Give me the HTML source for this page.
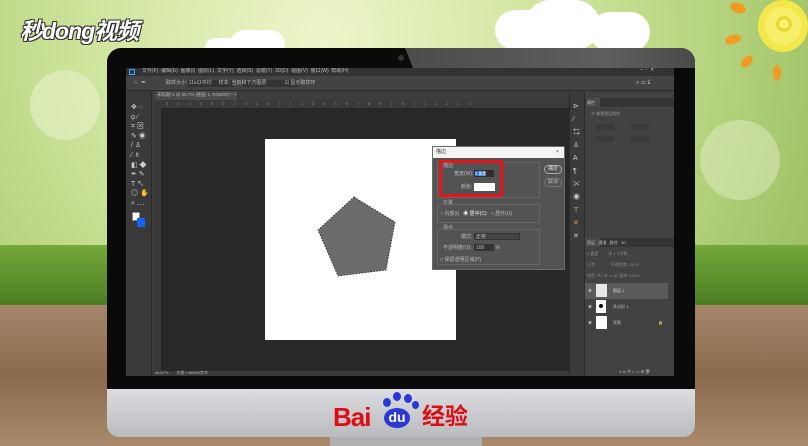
<!DOCTYPE html>
<html><head><meta charset="utf-8"><style>
*{margin:0;padding:0;box-sizing:border-box}
body{width:808px;height:446px;overflow:hidden;position:relative;font-family:"Liberation Sans","Noto Sans CJK SC",sans-serif;background:#9c7a5c;line-height:1}
.a{position:absolute}
.t{position:absolute;font-size:5px;color:#bbb;white-space:nowrap;line-height:1}
</style></head><body>
<!-- background -->
<div class="a" style="left:0;top:0;width:808px;height:260px;background:radial-gradient(circle at 40% 15%,#eef5cc 0,#d2e6a0 40%,#b4d27c 75%,#9cc062 100%)"></div>
<div class="a" style="left:30px;top:70px;width:70px;height:70px;border-radius:50%;background:#eef6d6;opacity:.5"></div>
<div class="a" style="left:700px;top:120px;width:80px;height:80px;border-radius:50%;background:#eef6d6;opacity:.4"></div>
<div class="a" style="left:0;top:245px;width:808px;height:65px;background:linear-gradient(#74a83a,#4a7a22)"></div>
<div class="a" style="left:0;top:305px;width:808px;height:141px;background:linear-gradient(#a5866a,#8c6a4e 50%,#a98a6c)"></div>
<!-- clouds -->
<div class="a" style="left:495px;top:10px;width:60px;height:40px;border-radius:30px;background:#fff"></div>
<div class="a" style="left:525px;top:0;width:75px;height:50px;border-radius:38px;background:#fff"></div>
<div class="a" style="left:590px;top:12px;width:60px;height:40px;border-radius:30px;background:#fff"></div>
<div class="a" style="left:205px;top:38px;width:40px;height:20px;border-radius:20px;background:#fff"></div>
<div class="a" style="left:230px;top:30px;width:55px;height:30px;border-radius:28px;background:#fff"></div>
<!-- sun -->
<div class="a" style="left:758px;top:0;width:50px;height:52px;border-radius:50%;border:7px solid #f3e84a;background:#f7ef6a"></div>
<div class="a" style="left:776px;top:16px;width:16px;height:16px;border-radius:50%;border:3px solid #e6d730"></div>
<div class="a" style="left:730px;top:3px;width:16px;height:10px;border-radius:50%;background:#f39a22;transform:rotate(20deg)"></div>
<div class="a" style="left:725px;top:35px;width:16px;height:9px;border-radius:50%;background:#f39a22;transform:rotate(-15deg)"></div>
<div class="a" style="left:740px;top:57px;width:14px;height:9px;border-radius:50%;background:#f39a22;transform:rotate(-45deg)"></div>
<div class="a" style="left:773px;top:65px;width:8px;height:16px;border-radius:50%;background:#f39a22"></div>
<!-- logo -->
<div class="a" style="left:20px;top:20px;font-size:23px;font-weight:bold;font-style:italic;color:#fff;text-shadow:1px 1px 0 #333,-1px -1px 0 #333,1px -1px 0 #333,-1px 1px 0 #333;letter-spacing:-1px">秒dong视频</div>
<!-- stand -->
<div class="a" style="left:330px;top:436px;width:152px;height:10px;background:#b0b0b0"></div>
<!-- monitor -->
<div class="a" style="left:107px;top:48px;width:588px;height:342px;background:#0a0a0a;border-radius:14px 14px 0 0;overflow:hidden">
 <div class="a" style="left:298px;top:0;width:290px;height:20px;background:linear-gradient(90deg,#4c4c4c,#5e5e5e 70%,#4a4a4a);clip-path:polygon(0 0,100% 0,100% 100%,8px 100%)"></div>
 <div class="a" style="left:291px;top:7px;width:6px;height:6px;border-radius:50%;background:#333"></div>
</div>
<div class="a" style="left:107px;top:389px;width:588px;height:48px;background:linear-gradient(#dcdde0,#b9bbbe);border-radius:0 0 12px 12px"></div>
<div class="a" style="left:333px;top:404px;font-size:26px;font-weight:bold;color:#e00c14;letter-spacing:-1px">Bai</div>
<div class="a" style="left:384px;top:408px;width:26px;height:20px;border-radius:50%;background:#2a38d8;color:#fff;font-size:14px;font-weight:bold;text-align:center;line-height:18px">du</div>
<div class="a" style="left:383px;top:398px;width:8px;height:9px;border-radius:50%;background:#2a38d8"></div>
<div class="a" style="left:393px;top:392px;width:8px;height:9px;border-radius:50%;background:#2a38d8"></div>
<div class="a" style="left:404px;top:394px;width:8px;height:9px;border-radius:50%;background:#2a38d8"></div>
<div class="a" style="left:412px;top:401px;width:7px;height:8px;border-radius:50%;background:#2a38d8"></div>
<div class="a" style="left:422px;top:405px;font-size:23px;font-weight:bold;color:#e00c14">经验</div>
<!-- screen -->
<div class="a" style="left:126px;top:68px;width:548px;height:308px;background:#3c3c3c;overflow:hidden">
 <div class="a" style="left:0;top:0;width:548px;height:8px;background:#323232"></div>
 <div class="a" style="left:3px;top:1px;width:6px;height:6px;background:#1d3a6a;border:1px solid #31a8ff"></div>
 <div class="t" style="left:16px;top:1px">文件(F)&nbsp;&nbsp;编辑(E)&nbsp;&nbsp;图像(I)&nbsp;&nbsp;图层(L)&nbsp;&nbsp;文字(Y)&nbsp;&nbsp;选择(S)&nbsp;&nbsp;滤镜(T)&nbsp;&nbsp;3D(D)&nbsp;&nbsp;视图(V)&nbsp;&nbsp;窗口(W)&nbsp;&nbsp;帮助(H)</div>
 <div class="t" style="left:514px;top:0">–&nbsp;&nbsp;▫&nbsp;&nbsp;✕</div>
 <div class="a" style="left:0;top:8px;width:548px;height:15px;background:#434343;border-bottom:1px solid #2a2a2a"></div>
 <div class="t" style="left:8px;top:12px;font-size:6px">⌂&nbsp;&nbsp;✒</div>
 <div class="a" style="left:62px;top:12px;width:45px;height:7px;background:#333"></div>
 <div class="a" style="left:117px;top:12px;width:55px;height:7px;background:#333"></div>
 <div class="t" style="left:40px;top:13px">取样大小: 11x11平均&nbsp;&nbsp;&nbsp;&nbsp;&nbsp;样本: 当前和下方图层&nbsp;&nbsp;&nbsp;&nbsp;&nbsp;&nbsp;&nbsp;&nbsp;&nbsp;&nbsp;&nbsp;&nbsp;&nbsp;☑ 显示取样环</div>
 <div class="t" style="left:510px;top:12px;font-size:6px">⌕ ▭ ⇪</div>
 <!-- left toolbar -->
 <div class="a" style="left:0;top:24px;width:26px;height:284px;background:#3a3a3a;border-right:1px solid #2a2a2a"></div>
 <div class="t" style="left:5px;top:35px;font-size:7px;line-height:9.6px;color:#ccc">✥ ◌<br>ϙ ⁄<br>⌗ ⊠<br>✎ ◉<br>/ ♙<br>⁄ ♗<br>◧ ◆<br>✒ ✎<br>T ↖<br>◎ ✋<br>⌕ ⋯</div>
 <div class="a" style="left:6px;top:144px;width:8px;height:9px;background:#fff;border:1px solid #888"></div>
 <div class="a" style="left:11px;top:150px;width:8px;height:9px;background:#1560f5"></div>
 <!-- doc tab & rulers -->
 <div class="a" style="left:27px;top:23px;width:523px;height:9px;background:#3c3c3c"></div>
 <div class="a" style="left:29px;top:23px;width:82px;height:9px;background:#4a4a4a"></div>
 <div class="t" style="left:31px;top:25px;font-size:4.5px">未标题-1 @ 66.7% (图层 1, RGB/8#) * ×</div>
 <div class="a" style="left:27px;top:32px;width:416px;height:8px;background:#3a3a3a"></div>
 <div class="t" style="left:40px;top:34px;font-size:4px;color:#888;letter-spacing:9px">5040302010012345678910111213</div>
 <div class="a" style="left:27px;top:32px;width:8px;height:276px;background:#3a3a3a"></div>
 <div class="a" style="left:35px;top:40px;width:408px;height:263px;background:#282828"></div>
 <div class="a" style="left:27px;top:303px;width:416px;height:5px;background:#3a3a3a"></div>
 <div class="t" style="left:29px;top:303px;font-size:4px">66.67%&nbsp;&nbsp;&nbsp;&nbsp;&nbsp;&nbsp;&nbsp;文档:2.86M/0字节</div>
 <!-- document -->
 <div class="a" style="left:139px;top:71px;width:191px;height:201px;background:#fff"></div>
 <svg class="a" style="left:0;top:0" width="548" height="308"><polygon points="228,129 269,154 260,202 212,208 192,162" fill="#6b6b6b" stroke="#222" stroke-width="0.8" stroke-dasharray="1.5,1.5"/></svg>
 <!-- dialog -->
 <div class="a" style="left:306px;top:78px;width:133px;height:124px;background:#535353;border:1px solid #6a6a6a">
  <div class="a" style="left:0;top:0;width:131px;height:11px;background:#f4f4f4"></div>
  <div class="t" style="left:3px;top:3px;color:#333">描边</div>
  <div class="t" style="left:123px;top:3px;color:#333">×</div>
  <div class="a" style="left:4px;top:15px;width:103px;height:36px;border:1px solid #666"></div>
  <div class="a" style="left:6px;top:13px;width:64px;height:37px;border:3px solid #e8141c"></div>
  <div class="t" style="left:10px;top:17px">描边</div>
  <div class="t" style="left:21px;top:25px">宽度(W):</div>
  <div class="a" style="left:41px;top:23px;width:20px;height:7px;background:#2d2d2d"></div>
  <div class="a" style="left:42px;top:24px;width:10px;height:5px;background:#2a7ad8"></div>
  <div class="t" style="left:42px;top:25px;font-size:4px;color:#fff">5 像素</div>
  <div class="t" style="left:28px;top:38px">颜色:</div>
  <div class="a" style="left:41px;top:36px;width:21px;height:8px;background:#fff"></div>
  <div class="a" style="left:111px;top:18px;width:18px;height:9px;border:1px solid #aaa;border-radius:5px"></div>
  <div class="t" style="left:115px;top:20px;color:#ddd">确定</div>
  <div class="a" style="left:111px;top:31px;width:18px;height:9px;border:1px solid #777;border-radius:5px"></div>
  <div class="t" style="left:115px;top:33px">取消</div>
  <div class="t" style="left:10px;top:54px">位置</div>
  <div class="a" style="left:4px;top:57px;width:103px;height:19px;border:1px solid #666"></div>
  <div class="t" style="left:7px;top:65px">○ 内部(I)&nbsp;&nbsp;&nbsp;<span style="color:#eee">◉ 居中(C)</span>&nbsp;&nbsp;&nbsp;○ 居外(U)</div>
  <div class="t" style="left:10px;top:79px">混合</div>
  <div class="a" style="left:4px;top:82px;width:103px;height:36px;border:1px solid #666"></div>
  <div class="t" style="left:28px;top:88px">模式:</div>
  <div class="a" style="left:41px;top:86px;width:46px;height:7px;background:#444;border:1px solid #333"></div>
  <div class="t" style="left:43px;top:88px">正常</div>
  <div class="t" style="left:10px;top:99px">不透明度(O):</div>
  <div class="a" style="left:41px;top:97px;width:20px;height:7px;background:#333"></div>
  <div class="t" style="left:43px;top:99px">100&nbsp;&nbsp;&nbsp;&nbsp;&nbsp;&nbsp;&nbsp;&nbsp;%</div>
  <div class="t" style="left:7px;top:111px">□ 保留透明区域(P)</div>
 </div>
 <!-- right icon strip -->
 <div class="a" style="left:443px;top:24px;width:16px;height:284px;background:#3a3a3a;border-left:1px solid #2a2a2a;border-right:1px solid #2a2a2a"></div>
 <div class="t" style="left:447px;top:32px;font-size:7px;line-height:13px;color:#ccc">⊳<br>⁄<br>⇆<br>♙<br>A<br>¶<br>✂<br>◉<br>⊤<br><span style="color:#f0a020">✕</span><br>✕</div>
 <!-- properties panel -->
 <div class="a" style="left:459px;top:24px;width:89px;height:284px;background:#424242"></div>
 <div class="a" style="left:459px;top:30px;width:89px;height:9px;background:#353535"></div>
 <div class="a" style="left:460px;top:30px;width:14px;height:9px;background:#4a4a4a"></div>
 <div class="t" style="left:461px;top:33px;font-size:4px">属性</div>
 <div class="t" style="left:465px;top:44px;font-size:4px;color:#999">▣ 像素图层属性</div>
 <div class="a" style="left:470px;top:56px;width:18px;height:6px;background:#3a3a3a"></div>
 <div class="a" style="left:505px;top:56px;width:18px;height:6px;background:#3a3a3a"></div>
 <div class="a" style="left:470px;top:68px;width:18px;height:6px;background:#3a3a3a"></div>
 <div class="a" style="left:505px;top:68px;width:18px;height:6px;background:#3a3a3a"></div>
 <!-- layers -->
 <div class="a" style="left:459px;top:170px;width:89px;height:9px;background:#353535"></div>
 <div class="a" style="left:459px;top:170px;width:15px;height:9px;background:#4a4a4a"></div>
 <div class="t" style="left:461px;top:173px;font-size:4px">图层&nbsp;&nbsp;&nbsp;通道&nbsp;&nbsp;&nbsp;路径&nbsp;&nbsp;&nbsp;3D</div>
 <div class="t" style="left:461px;top:184px;font-size:4px;color:#999">⌕ 类型&nbsp;&nbsp;&nbsp;&nbsp;&nbsp;&nbsp;&nbsp;&nbsp;&nbsp;▣ ◐ T ⌗ ◍</div>
 <div class="t" style="left:461px;top:195px;font-size:4px;color:#888">正常&nbsp;&nbsp;&nbsp;&nbsp;&nbsp;&nbsp;&nbsp;&nbsp;&nbsp;&nbsp;&nbsp;&nbsp;&nbsp;&nbsp;不透明度: 100%</div>
 <div class="t" style="left:461px;top:206px;font-size:4px;color:#888">锁定: ▣ ⁄ ✥ ▭ ◍&nbsp;&nbsp;填充: 100%</div>
 <div class="a" style="left:459px;top:215px;width:83px;height:16px;background:#5a5a5a"></div>
 <div class="a" style="left:470px;top:216px;width:11px;height:13px;background:#e6e6e6"></div>
 <div class="a" style="left:470px;top:232px;width:10px;height:13px;background:#fff"></div>
 <div class="a" style="left:473px;top:236px;width:4px;height:4px;border-radius:50%;background:#000"></div>
 <div class="a" style="left:470px;top:248px;width:11px;height:13px;background:#fff"></div>
 <div class="t" style="left:462px;top:221px;font-size:4px">◉</div><div class="t" style="left:487px;top:221px;font-size:4px;color:#ddd">图层 1</div>
 <div class="t" style="left:462px;top:237px;font-size:4px">◉</div><div class="t" style="left:487px;top:237px;font-size:4px">多边形 1</div>
 <div class="t" style="left:462px;top:253px;font-size:4px">◉</div><div class="t" style="left:487px;top:253px;font-size:4px">背景</div><div class="t" style="left:532px;top:253px;font-size:4px">🔒</div>
 <div class="t" style="left:493px;top:302px;font-size:4px">∞ fx ▣ ◐ ▭ ⊞ 🗑</div>
</div>
</body></html>
